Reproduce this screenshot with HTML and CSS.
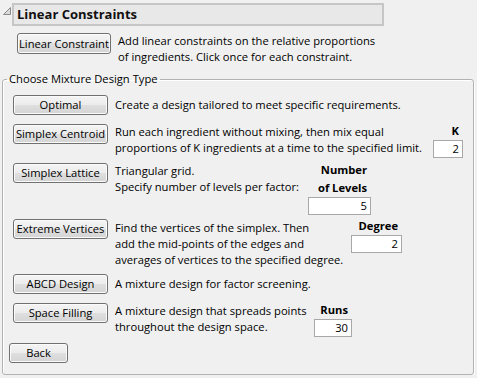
FILE: index.html
```html
<!DOCTYPE html>
<html>
<head>
<meta charset="utf-8">
<link rel="stylesheet" href="styles.css">
</head>
<body>
<div class="outline">
  <svg class="disclosure" width="8" height="8" viewBox="0 0 8 8"><path d="M7.5 0.5 L7.5 7.5 L0.5 7.5 Z" fill="#d9d9d9" stroke="#8c8c8c" stroke-width="1"/></svg>
  <div class="outline-title">Linear Constraints</div>
</div>
<div class="lc-row">
  <button class="btn btn-lc">Linear Constraint</button>
  <div class="desc">Add linear constraints on the relative proportions<br>of ingredients. Click once for each constraint.</div>
</div>
<fieldset class="group">
  <legend>Choose Mixture Design Type</legend>
  <div class="row r-opt">
    <button class="btn">Optimal</button>
    <div class="desc single">Create a design tailored to meet specific requirements.</div>
  </div>
  <div class="row r-cen">
    <button class="btn">Simplex Centroid</button>
    <div class="desc d-cen">Run each ingredient without mixing, then mix equal<br>proportions of K ingredients at a time to the specified limit.</div>
    <div class="param">
      <div class="plabel">K</div>
      <div class="num n-k">2</div>
    </div>
  </div>
  <div class="row r-lat">
    <button class="btn">Simplex Lattice</button>
    <div class="desc d-lat">Triangular grid.<br>Specify number of levels per factor:</div>
    <div class="param">
      <div class="plabel">Number<br>of Levels</div>
      <div class="num n-lev">5</div>
    </div>
  </div>
  <div class="row r-ext">
    <button class="btn">Extreme Vertices</button>
    <div class="desc d-ext">Find the vertices of the simplex. Then<br>add the mid-points of the edges and<br>averages of vertices to the specified degree.</div>
    <div class="param">
      <div class="plabel">Degree</div>
      <div class="num n-deg">2</div>
    </div>
  </div>
  <div class="row r-abcd">
    <button class="btn">ABCD Design</button>
    <div class="desc single">A mixture design for factor screening.</div>
  </div>
  <div class="row r-space">
    <button class="btn">Space Filling</button>
    <div class="desc d-space">A mixture design that spreads points<br>throughout the design space.</div>
    <div class="param">
      <div class="plabel">Runs</div>
      <div class="num n-runs">30</div>
    </div>
  </div>
  <button class="btn btn-back">Back</button>
</fieldset>
</body>
</html>
```

FILE: styles.css
```css
* { box-sizing: border-box; }

body {
  margin: 0;
  padding: 0 3px 0 2px;
  background: #f0f0f0;
  font-family: "Open Sans", "Noto Sans", sans-serif;
  font-size: 11.2px;
  line-height: 16px;
  color: #000;
}

.outline {
  display: flex;
  align-items: flex-start;
  padding-top: 3px;
}

.disclosure {
  margin: 4px 1px 0 1px;
  flex: none;
}

.outline-title {
  width: 372px;
  height: 23px;
  border: 2px solid #c6c6c6;
  background: #e8e8e8;
  padding-left: 3px;
  font-size: 13px;
  font-weight: bold;
  line-height: 19px;
  color: #111;
}

.lc-row {
  display: flex;
  align-items: flex-start;
  margin: 6px 0 0 15px;
}

.btn {
  flex: none;
  width: 95px;
  height: 20px;
  padding: 0;
  border: 1px solid #707070;
  border-radius: 3px;
  background: linear-gradient(#f4f4f4 0%, #ececec 50%, #dfdfdf 50%, #d4d4d4 100%);
  box-shadow: inset 0 0 0 1px #fbfbfb;
  font-family: inherit;
  font-size: 11.2px;
  line-height: 16px;
  color: #000;
  text-align: center;
}

.btn-lc {
  width: 94px;
  height: 21px;
  margin-top: 1px;
}

.desc {
  flex: none;
  margin-left: 7px;
  margin-top: 1px;
  white-space: nowrap;
}

.desc.single { margin-top: 2px; }

.group {
  margin: 5px 0 0 0;
  padding: 7px 6px 11px 6px;
  border: 1px solid #b2b2b2;
  border-radius: 3px;
  box-shadow: inset 1px 1px 0 #fff, 1px 1px 0 #fff;
  min-width: 0;
}

.group legend {
  margin-left: -2px;
  padding: 0 2px;
  line-height: 18px;
}

.row {
  display: flex;
  align-items: flex-start;
  margin-left: 4px;
}

.r-opt { height: 29px; }
.r-cen { height: 39px; }
.r-lat { height: 56px; }
.r-ext { height: 55px; }
.r-abcd { height: 29px; }
.r-space { height: 40px; }

.d-cen { width: 311px; margin-top: 0; }
.d-lat { width: 186px; margin-top: 0; }
.d-ext { width: 229px; }
.d-space { width: 192px; margin-top: 0; }

.param {
  flex: none;
  margin-left: 7px;
  margin-top: -2px;
  display: flex;
  flex-direction: column;
}

.plabel {
  font-weight: bold;
  line-height: 18px;
  text-align: right;
  padding-right: 4px;
  white-space: nowrap;
}

.num {
  height: 18px;
  border: 1px solid #a8a8a8;
  background: #fff;
  text-align: right;
  padding-right: 3px;
  line-height: 16px;
}

.n-k { width: 30px; }
.n-lev { width: 63px; }
.n-deg { width: 51px; }
.n-runs { width: 38px; }

.btn-back {
  width: 59px;
  height: 20px;
}
```
